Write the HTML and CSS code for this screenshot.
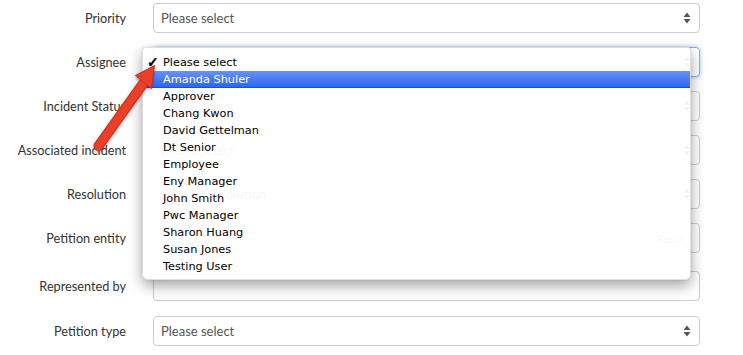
FILE: index.html
```html
<!DOCTYPE html>
<html lang="en">
<head>
<meta charset="utf-8">
<title>Incident form</title>
<link rel="stylesheet" href="styles.css">
</head>
<body>
<div class="form">
  <div class="row">
    <label class="lbl">Priority</label>
    <div class="field select"><span class="val">Please select</span>
      <svg class="arrows" width="8" height="12" viewBox="0 0 8 12"><path d="M4 0.5L7.5 5H0.5Z M4 11.5L7.5 7H0.5Z"/></svg>
    </div>
  </div>
  <div class="row">
    <label class="lbl">Assignee</label>
    <div class="field select focus"><span class="val">Please select</span>
      <svg class="arrows" width="8" height="12" viewBox="0 0 8 12"><path d="M4 0.5L7.5 5H0.5Z M4 11.5L7.5 7H0.5Z"/></svg>
      <ul class="menu">
        <li class="opt"><span class="check">✓</span>Please select</li>
        <li class="opt hl">Amanda Shuler</li>
        <li class="opt">Approver</li>
        <li class="opt">Chang Kwon</li>
        <li class="opt">David Gettelman</li>
        <li class="opt">Dt Senior</li>
        <li class="opt">Employee</li>
        <li class="opt">Eny Manager</li>
        <li class="opt">John Smith</li>
        <li class="opt">Pwc Manager</li>
        <li class="opt">Sharon Huang</li>
        <li class="opt">Susan Jones</li>
        <li class="opt">Testing User</li>
      </ul>
    </div>
  </div>
  <div class="row">
    <label class="lbl">Incident Status</label>
    <div class="field select"><span class="val">Please select</span>
      <svg class="arrows" width="8" height="12" viewBox="0 0 8 12"><path d="M4 0.5L7.5 5H0.5Z M4 11.5L7.5 7H0.5Z"/></svg>
    </div>
  </div>
  <div class="row">
    <label class="lbl">Associated incident</label>
    <div class="field select"><span class="val">Please select</span>
      <svg class="arrows" width="8" height="12" viewBox="0 0 8 12"><path d="M4 0.5L7.5 5H0.5Z M4 11.5L7.5 7H0.5Z"/></svg>
    </div>
  </div>
  <div class="row">
    <label class="lbl">Resolution</label>
    <div class="field select"><span class="val">Select a resolution</span>
      <svg class="arrows" width="8" height="12" viewBox="0 0 8 12"><path d="M4 0.5L7.5 5H0.5Z M4 11.5L7.5 7H0.5Z"/></svg>
    </div>
  </div>
  <div class="row">
    <label class="lbl">Petition entity</label>
    <div class="field input"><span class="val"></span><span class="btn">Reset</span></div>
  </div>
  <div class="row row-spaced">
    <label class="lbl">Represented by</label>
    <div class="field input"></div>
  </div>
  <div class="row row-last">
    <label class="lbl">Petition type</label>
    <div class="field select"><span class="val">Please select</span>
      <svg class="arrows" width="8" height="12" viewBox="0 0 8 12"><path d="M4 0.5L7.5 5H0.5Z M4 11.5L7.5 7H0.5Z"/></svg>
    </div>
  </div>
</div>

<svg class="callout" width="743" height="355" viewBox="0 0 743 355">
  <defs>
    <filter id="sh" x="-20%" y="-20%" width="140%" height="140%">
      <feDropShadow dx="0" dy="1.5" stdDeviation="1.5" flood-color="#000" flood-opacity="0.35"/>
    </filter>
  </defs>
  <g filter="url(#sh)">
    <line x1="98.5" y1="146" x2="145" y2="81" stroke="#c42e1c" stroke-width="10" stroke-linecap="round"/>
    <line x1="98.5" y1="146" x2="145" y2="81" stroke="#ea3f2b" stroke-width="8" stroke-linecap="round"/>
    <path d="M154.5 65.5 L151.5 88.5 L135.5 75.5 Z" fill="#ea3f2b" stroke="#c42e1c" stroke-width="1" stroke-linejoin="round"/>
  </g>
</svg>
</body>
</html>
```

FILE: styles.css
```css
html, body {
  margin: 0;
  padding: 0;
  background: #ffffff;
}

body {
  width: 743px;
  height: 355px;
  overflow: hidden;
  position: relative;
  font-family: Lato, "Open Sans", sans-serif;
}

.form {
  padding-top: 3px;
  display: flex;
  flex-direction: column;
  gap: 14px;
}

.row {
  display: flex;
  align-items: center;
  gap: 27px;
  height: 30px;
}

.row-spaced {
  margin-top: 4px;
}

.row-last {
  margin-top: 1px;
}

.lbl {
  width: 126px;
  flex: none;
  text-align: right;
  font-size: 12.7px;
  color: #333;
  line-height: 30px;
  white-space: nowrap;
}

.field {
  position: relative;
  width: 547px;
  height: 30px;
  box-sizing: border-box;
  border: 1px solid #ccc;
  border-radius: 4px;
  background: #fff;
  display: flex;
  align-items: center;
  padding: 0 7px;
  font-size: 13px;
  color: #555;
}

.field.focus {
  border-color: #7fb4ec;
  box-shadow: 0 0 4px rgba(102, 160, 233, 0.6);
}

.val {
  flex: 1;
}

.arrows {
  fill: #555;
  flex: none;
  margin-right: 1px;
}

.btn {
  font-size: 11px;
  color: #777;
  border: 1px solid #ccc;
  border-radius: 3px;
  padding: 1px 5px;
  margin-right: 2px;
}

.menu {
  position: absolute;
  left: -12px;
  top: -1px;
  width: 549px;
  margin: 0;
  padding: 6px 0 4px;
  list-style: none;
  box-sizing: border-box;
  background: rgba(255, 255, 255, 0.95);
  border: 1px solid rgba(0, 0, 0, 0.12);
  border-radius: 4px 4px 6px 6px;
  box-shadow: 0 6px 14px rgba(0, 0, 0, 0.35), 0 0 2px rgba(0, 0, 0, 0.15);
  font-family: "DejaVu Sans", sans-serif;
  font-size: 11.3px;
  color: #000;
  z-index: 5;
}

.opt {
  position: relative;
  height: 17px;
  line-height: 17px;
  padding-left: 20px;
  white-space: nowrap;
}

.check {
  position: absolute;
  left: 4px;
  top: 0;
  font-size: 14px;
  -webkit-text-stroke: 0.7px #000;
}

.opt.hl {
  color: #fff;
  background: linear-gradient(#6a91f8, #2c66f1);
  border-bottom: 1px solid #1650e6;
  box-sizing: border-box;
}

.callout {
  position: absolute;
  left: 0;
  top: 0;
  pointer-events: none;
  z-index: 10;
}
```
